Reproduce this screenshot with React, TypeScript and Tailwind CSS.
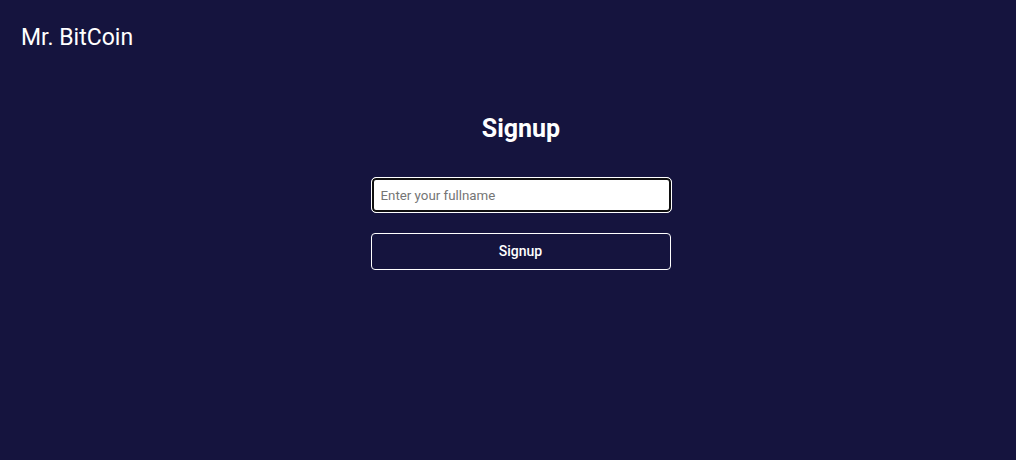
import { useState } from "react";

export default function App() {
  const [fullname, setFullname] = useState("");

  return (
    <div className="min-h-screen h-[460px] bg-[#15143e] text-white font-['Roboto',sans-serif]">
      <header className="px-[21px] pt-[23px]">
        <h2 className="text-[23px] leading-[30px] font-normal">Mr. BitCoin</h2>
      </header>

      <div className="pl-[26px]">
        <main className="mx-auto mt-[59px] flex w-[301px] flex-col items-center">
          <h1 className="text-[25px] leading-[34px] font-bold">Signup</h1>

          <form
            className="mt-[31px] flex w-full flex-col gap-[20px]"
            onSubmit={(e) => e.preventDefault()}
          >
            <input
              autoFocus
              className="h-[36px] w-full rounded-[5px] border border-white bg-white px-[9px] text-[13.3px] text-black outline-none shadow-[inset_0_0_0_2px_#101010] placeholder:text-[#757575]"
              placeholder="Enter your fullname"
              value={fullname}
              onChange={(e) => setFullname(e.target.value)}
            />
            <button className="h-[37px] w-[300px] rounded-[4px] border border-white bg-transparent text-[14px] font-medium text-white">
              Signup
            </button>
          </form>
        </main>
      </div>
    </div>
  );
}
